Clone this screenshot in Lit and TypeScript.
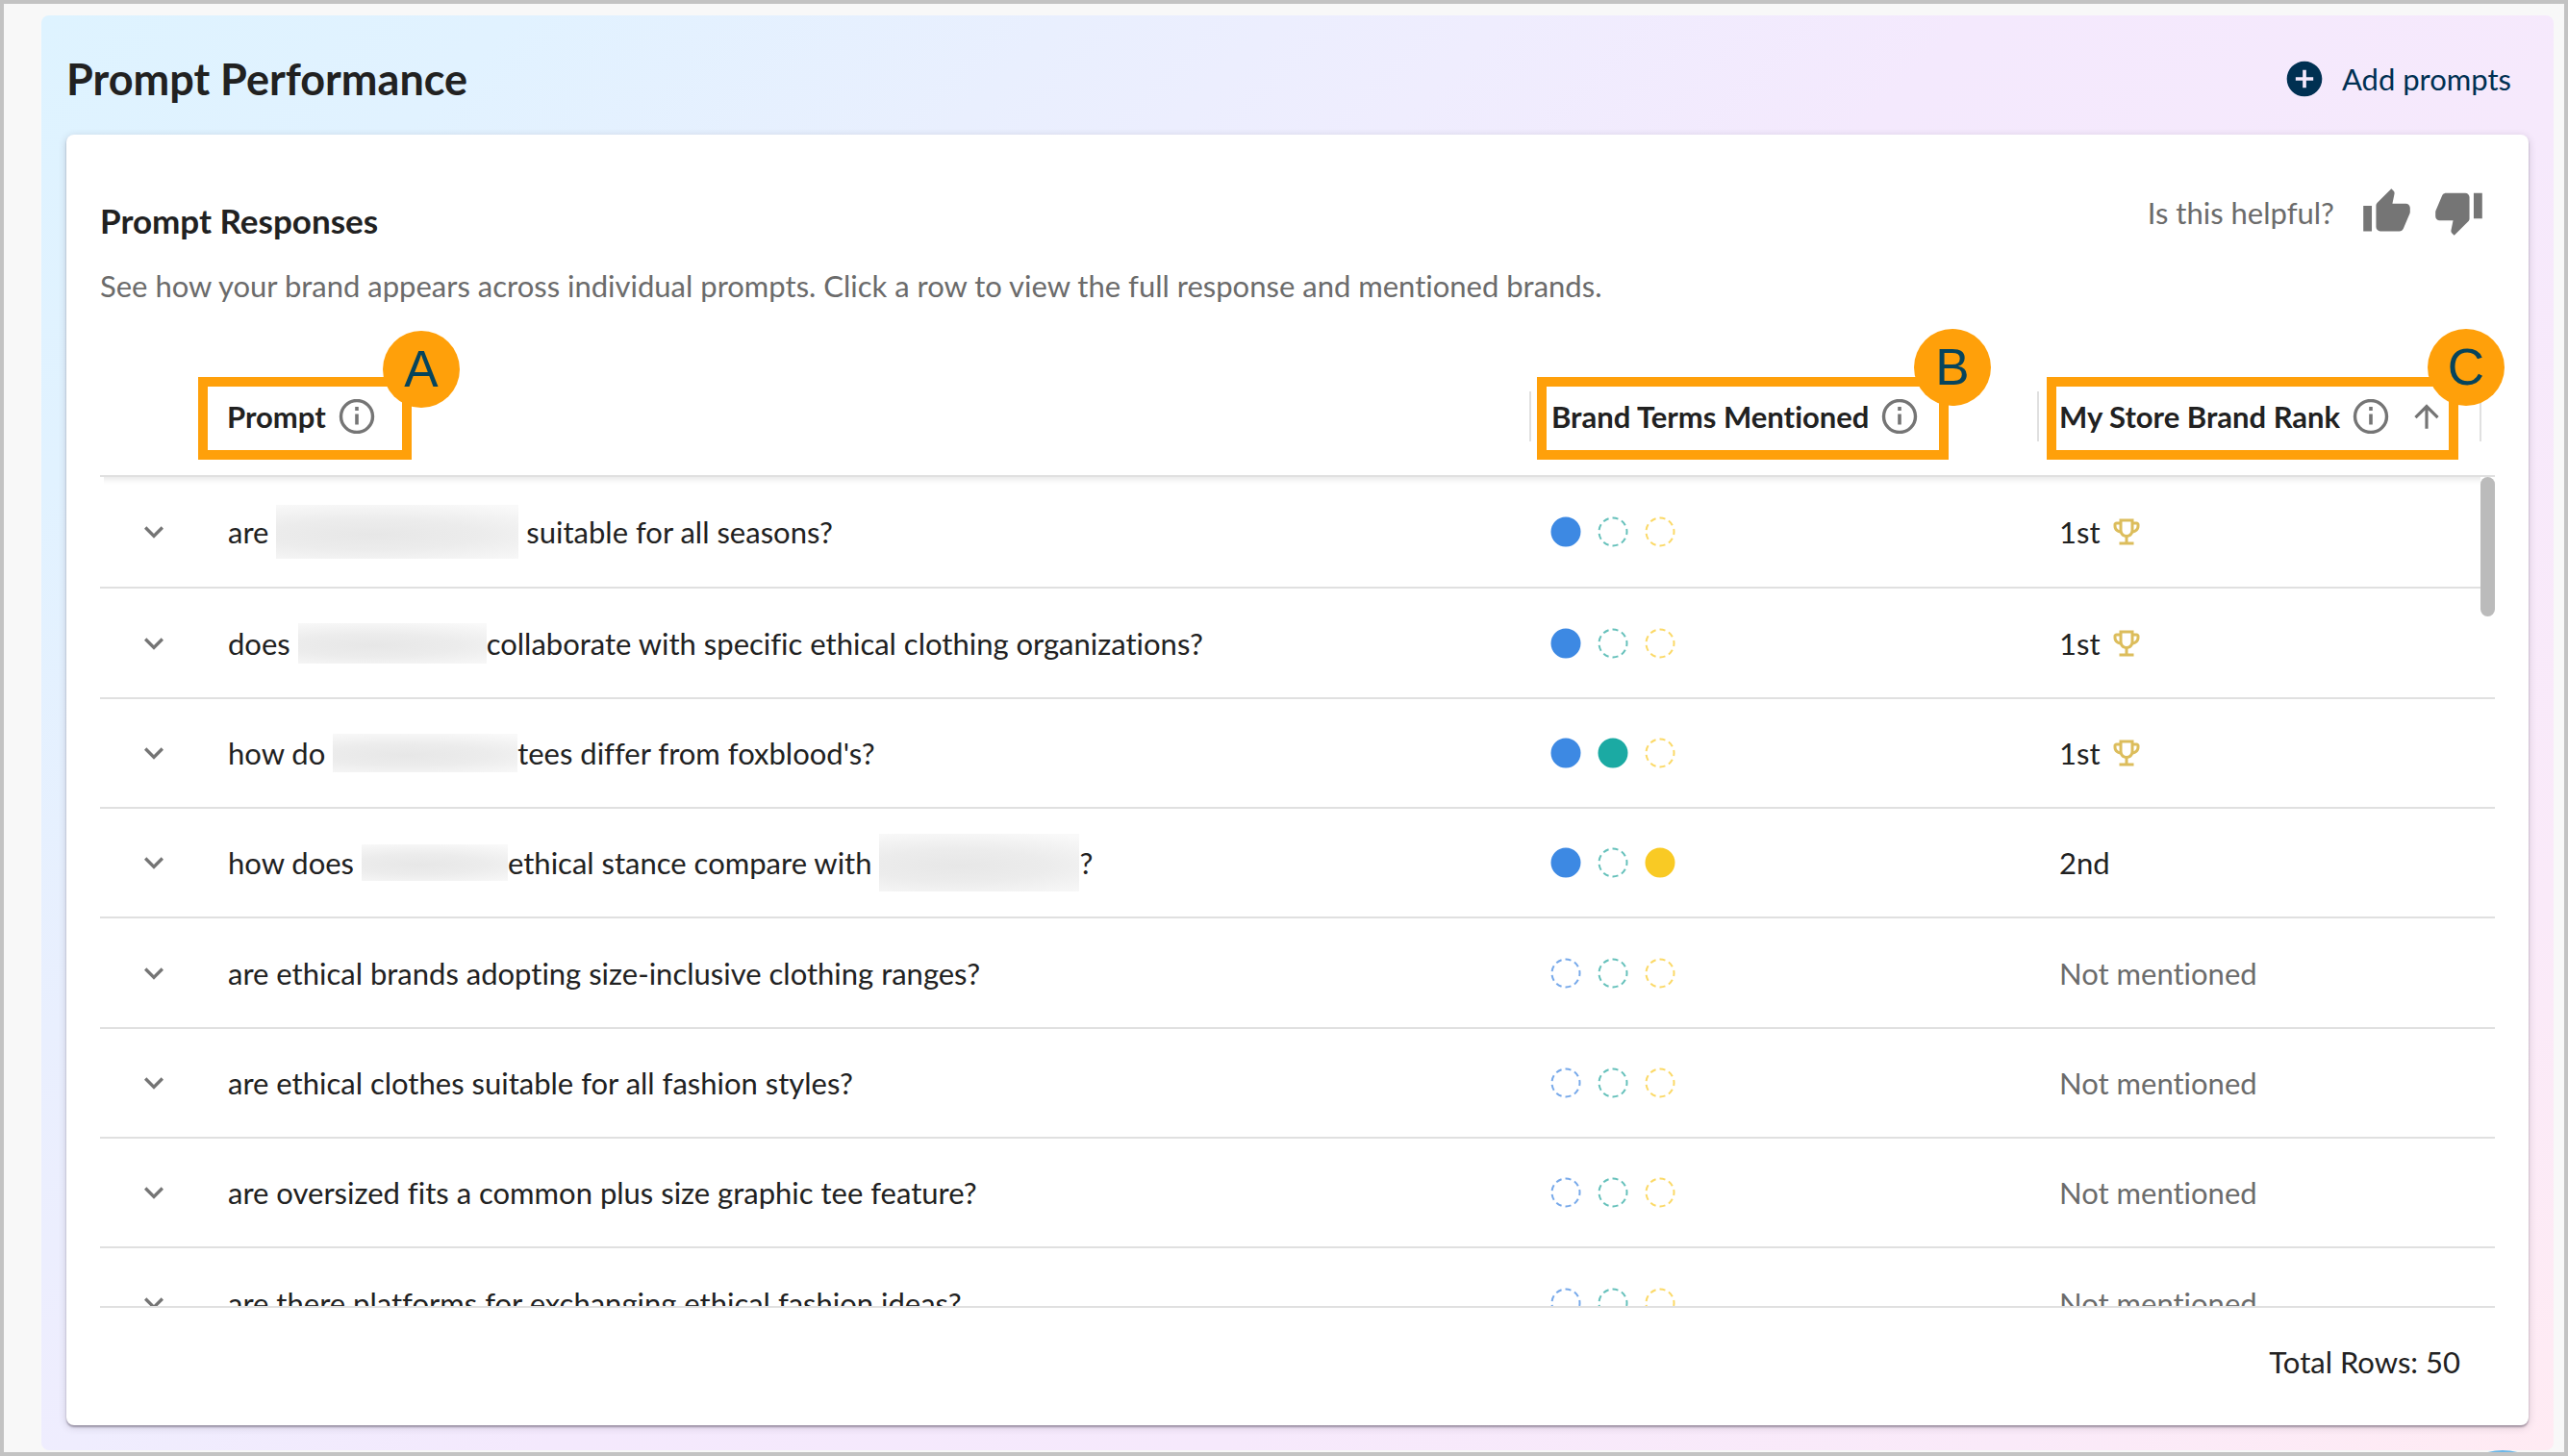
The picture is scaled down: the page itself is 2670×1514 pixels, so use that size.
import { LitElement, html, css, svg, nothing } from "lit";
import { customElement, property, state } from "lit/decorators.js";
import { classMap } from "lit/directives/class-map.js";

type Part = string | { hidden: "xl" | "l" | "m" | "s" | "xxl" };

interface PromptRow {
  prompt: Part[];
  mentions: [boolean, boolean, boolean];
  rank: string | null;
}

const ROWS: PromptRow[] = [
  { prompt: ["are ", { hidden: "xl" }, " suitable for all seasons?"], mentions: [true, false, false], rank: "1st" },
  { prompt: ["does ", { hidden: "l" }, "collaborate with specific ethical clothing organizations?"], mentions: [true, false, false], rank: "1st" },
  { prompt: ["how do ", { hidden: "m" }, "tees differ from foxblood's?"], mentions: [true, true, false], rank: "1st" },
  { prompt: ["how does ", { hidden: "s" }, "ethical stance compare with ", { hidden: "xxl" }, "?"], mentions: [true, false, true], rank: "2nd" },
  { prompt: ["are ethical brands adopting size-inclusive clothing ranges?"], mentions: [false, false, false], rank: null },
  { prompt: ["are ethical clothes suitable for all fashion styles?"], mentions: [false, false, false], rank: null },
  { prompt: ["are oversized fits a common plus size graphic tee feature?"], mentions: [false, false, false], rank: null },
  { prompt: ["are there platforms for exchanging ethical fashion ideas?"], mentions: [false, false, false], rank: null },
];

const TERM_COLORS = ["blue", "teal", "yellow"];

const ICONS = {
  add: svg`<path d="M12 2C6.48 2 2 6.48 2 12s4.48 10 10 10 10-4.48 10-10S17.52 2 12 2zm5 11h-4v4h-2v-4H7v-2h4V7h2v4h4v2z"/>`,
  up: svg`<path d="M1 21h4V9H1v12zm22-11c0-1.1-.9-2-2-2h-6.31l.95-4.57.03-.32c0-.41-.17-.79-.44-1.06L14.17 1 7.59 7.59C7.22 7.95 7 8.45 7 9v10c0 1.1.9 2 2 2h9c.83 0 1.54-.5 1.84-1.22l3.02-7.05c.09-.23.14-.47.14-.73v-2z"/>`,
  down: svg`<path d="M15 3H6c-.83 0-1.54.5-1.84 1.22l-3.02 7.05c-.09.23-.14.47-.14.73v2c0 1.1.9 2 2 2h6.31l-.95 4.57-.03.32c0 .41.17.79.44 1.06L9.83 23l6.59-6.59c.36-.36.58-.86.58-1.41V5c0-1.1-.9-2-2-2zm4 0v12h4V3h-4z"/>`,
  chevron: svg`<path d="M16.59 8.59 12 13.17 7.41 8.59 6 10l6 6 6-6z"/>`,
  arrow: svg`<path d="m4 12 1.41 1.41L11 7.83V20h2V7.83l5.58 5.59L20 12l-8-8-8 8z"/>`,
  trophy: svg`<path d="M19 5h-2V3H7v2H5c-1.1 0-2 .9-2 2v1c0 2.55 1.92 4.63 4.39 4.94.63 1.5 1.98 2.63 3.61 2.96V19H7v2h10v-2h-4v-3.1c1.63-.33 2.98-1.46 3.61-2.96C19.08 12.63 21 10.55 21 8V7c0-1.1-.9-2-2-2zM5 8V7h2v3.82C5.84 10.4 5 9.3 5 8zm7 6c-1.65 0-3-1.35-3-3V5h6v6c0 1.65-1.35 3-3 3zm7-6c0 1.3-.84 2.4-2 2.82V7h2v1z"/>`,
};

const icon = (name: keyof typeof ICONS, cls: string) =>
  html`<svg class="icon ${cls}" viewBox="0 0 24 24" aria-hidden="true">${ICONS[name]}</svg>`;

const base = css`
  * { box-sizing: border-box; }
  button {
    font: inherit;
    color: inherit;
    background: none;
    border: 0;
    padding: 0;
    margin: 0;
    cursor: pointer;
  }
  .icon { display: block; flex: none; fill: currentColor; }
`;

@customElement("term-dots")
export class TermDots extends LitElement {
  @property({ attribute: false }) mentions: boolean[] = [];

  static styles = css`
    :host { display: flex; gap: 17px; }
    .dot { display: block; width: 32px; height: 32px; }
    .ring { stroke-width: 2; stroke-dasharray: 6 4; stroke-dashoffset: 3; }
    .blue { fill: #3d89e3; }
    .teal { fill: #1baaa3; }
    .yellow { fill: #f9ca24; }
    .ring.blue { fill: none; stroke: #77a9ea; }
    .ring.teal { fill: none; stroke: #66c1bb; }
    .ring.yellow { fill: none; stroke: #fbd967; }
  `;

  render() {
    return this.mentions.map(
      (on, i) => html`<svg class="dot" viewBox="0 0 32 32" aria-hidden="true">
        <circle
          class=${classMap({ ring: !on, [TERM_COLORS[i]]: true })}
          cx="16" cy="16" r=${on ? 15.5 : 14.5} pathLength=${on ? nothing : 90}
        ></circle>
      </svg>`
    );
  }
}

@customElement("column-heading")
export class ColumnHeading extends LitElement {
  @property() label = "";
  @property({ type: Boolean }) sorted = false;

  static styles = [
    base,
    css`
      :host { display: flex; align-items: center; }
      .label { font-weight: 700; }
      .info { margin-left: 13px; color: #757575; }
      .info-icon { display: block; width: 38px; height: 36px; fill: none; stroke: currentColor; }
      .sort { margin-left: 20px; color: #757575; }
      .arrow { width: 38px; height: 38px; }
    `,
  ];

  render() {
    return html`
      <span class="label">${this.label}</span>
      <button class="info" aria-label="About ${this.label}">
        <svg class="info-icon" viewBox="0 0 38 36" aria-hidden="true">
          <circle cx="19" cy="18" r="16.5" stroke-width="3.4"></circle>
          <path d="M19 8v4M19 15.5v11" stroke-width="3.6"></path>
        </svg>
      </button>
      ${this.sorted
        ? html`<button class="sort" aria-label="Sorted ascending">${icon("arrow", "arrow")}</button>`
        : nothing}
    `;
  }
}

@customElement("app-root")
export class AppRoot extends LitElement {
  @state() private rows = ROWS;

  static styles = [
    base,
    css`
      :host {
        display: flex;
        box-sizing: border-box;
        height: 100vh;
        padding: 12px 11px 2px 39px;
        border: 4px solid #c3c3c3;
        background: #f8f8f8;
        color: #212121;
        font-family: Lato, "Open Sans", sans-serif;
        font-size: 31px;
        line-height: 40px;
        font-variant-ligatures: none;
        overflow: hidden;
        position: relative;
      }
      .panel {
        flex: 1;
        min-width: 0;
        display: flex;
        flex-direction: column;
        padding: 0 26px 26px;
        border-radius: 8px;
        background: linear-gradient(135deg, #def3ff 0%, #e1f2ff 12%, #e9effe 26%, #efedfe 37%, #f4e9fd 49%, #f6e9fc 66%, #faeaf9 86%, #ffebf3 100%);
      }
      .bar {
        display: flex;
        align-items: center;
        justify-content: space-between;
        height: 124px;
        padding: 8px 18px 0 0;
      }
      h1, h2, p { margin: 0; }
      h1 { font-size: 45px; line-height: 56px; font-weight: 700; }
      .add { display: flex; align-items: center; gap: 17px; color: #003052; }
      .add-icon { width: 44px; height: 44px; }
      .card {
        flex: 1;
        min-height: 0;
        display: flex;
        flex-direction: column;
        padding: 0 35px;
        border-radius: 8px;
        background: #fff;
        box-shadow: 0 2px 2px rgba(60, 50, 70, 0.4), 0 2px 8px rgba(60, 50, 70, 0.2);
      }
      .intro {
        flex: none;
        display: flex;
        justify-content: space-between;
        align-items: flex-start;
        height: 232px;
        padding: 54px 11px 0 0;
      }
      .intro-text { padding-top: 13px; display: flex; flex-direction: column; gap: 26px; }
      h2 { font-size: 35px; line-height: 44px; font-weight: 700; }
      .muted { color: #6b6b6b; }
      .feedback { display: flex; align-items: center; gap: 22px; }
      .question { padding-right: 6px; }
      .thumb { color: #757575; }
      .thumb-icon { width: 53px; height: 53px; }
      .grid {
        flex: 1;
        min-height: 0;
        position: relative;
        clip-path: inset(-60px -30px 0);
      }
      table { width: 100%; table-layout: fixed; border-collapse: separate; border-spacing: 0; }
      th, td { padding: 0; text-align: left; font-weight: 400; }
      .col-expand { width: 111px; }
      .col-terms { width: 528px; }
      .col-rank { width: 460px; }
      .col-gutter { width: 16px; }
      th { height: 124px; border-bottom: 2px solid #e0e0e0; position: relative; }
      .head { display: flex; align-items: center; gap: 21px; }
      .head-first { padding-left: 21px; }
      .sep { width: 2px; height: 52px; background: #e0e0e0; }
      .shade {
        position: absolute;
        top: 124px;
        left: 4px;
        right: 15px;
        height: 8px;
        background: linear-gradient(rgba(0, 0, 0, 0.08), rgba(0, 0, 0, 0.02) 60%, rgba(0, 0, 0, 0));
      }
      .thumb-bar {
        position: absolute;
        top: 124px;
        right: 0;
        width: 15px;
        height: 145px;
        border-radius: 8px;
        background: #bbbbbb;
      }
      td { height: 114px; border-bottom: 2px solid #e0e0e0; white-space: nowrap; }
      tr:nth-child(3n + 2) td { height: 115px; }
      tr:first-child td { height: 116px; }
      .expand { display: block; margin: 0 auto; color: #757575; }
      .chevron { width: 40px; height: 40px; }
      .line { display: flex; align-items: center; white-space: pre; }
      .prompt, .dots { padding-left: 22px; }
      .rank { padding-left: 23px; }
      .rank-line { display: flex; align-items: center; gap: 9px; }
      .trophy { width: 36px; height: 36px; color: #dcbd5c; }
      .redacted {
        display: block;
        background: radial-gradient(ellipse 100% 62% at 40% 55%, #e7e7e7 0%, #ececec 45%, #f9f9f9 100%);
      }
      .xl { width: 252px; height: 56px; }
      .l { width: 196px; height: 42px; }
      .m { width: 192px; height: 40px; }
      .s { width: 152px; height: 38px; }
      .xxl { width: 208px; height: 60px; }
      .callout {
        position: absolute;
        top: 20px;
        height: 86px;
        border: 10px solid #ffa00a;
        pointer-events: none;
        z-index: 1;
      }
      .callout-a { left: -9px; width: 222px; }
      .callout-b { left: 8px; width: 428px; }
      .callout-c { left: 10px; width: 428px; }
      .badge {
        position: absolute;
        top: -60px;
        right: -58px;
        width: 80px;
        height: 80px;
        border-radius: 50%;
        background: #ffa00a;
        color: #06445c;
        font: 400 53px/80px "Liberation Sans", Arial, sans-serif;
        text-align: center;
      }
      .callout-a .badge { top: -58px; right: -60px; }
      .callout-b .badge { right: -54px; }
      .footer {
        flex: none;
        display: flex;
        justify-content: flex-end;
        align-items: center;
        height: 124px;
        padding: 0 36px 10px 0;
        border-top: 2px solid #e0e0e0;
      }
      .chat {
        position: absolute;
        right: 4px;
        bottom: -118px;
        width: 120px;
        height: 120px;
        border-radius: 50%;
        background: #6ab7e8;
      }
    `,
  ];

  private prompt(parts: Part[]) {
    return parts.map((part) =>
      typeof part === "string"
        ? html`<span>${part}</span>`
        : html`<span class="redacted ${part.hidden}" role="img" aria-label="hidden brand"></span>`
    );
  }

  private row(r: PromptRow) {
    return html`<tr>
      <td><button class="expand" aria-label="Expand row">${icon("chevron", "chevron")}</button></td>
      <td class="prompt"><div class="line">${this.prompt(r.prompt)}</div></td>
      <td class="dots"><term-dots .mentions=${r.mentions}></term-dots></td>
      <td class="rank">
        ${r.rank
          ? html`<div class="rank-line">${r.rank}${r.rank === "1st" ? icon("trophy", "trophy") : nothing}</div>`
          : html`<span class="muted">Not mentioned</span>`}
      </td>
      <td></td>
    </tr>`;
  }

  private callout(letter: string) {
    return html`<div class="callout callout-${letter.toLowerCase()}"><span class="badge">${letter}</span></div>`;
  }

  render() {
    return html`
      <main class="panel">
        <header class="bar">
          <h1>Prompt Performance</h1>
          <button class="add">${icon("add", "add-icon")}<span>Add prompts</span></button>
        </header>
        <section class="card">
          <div class="intro">
            <div class="intro-text">
              <h2>Prompt Responses</h2>
              <p class="muted">See how your brand appears across individual prompts. Click a row to view the full response and mentioned brands.</p>
            </div>
            <div class="feedback">
              <span class="muted question">Is this helpful?</span>
              <button class="thumb" aria-label="Helpful">${icon("up", "thumb-icon")}</button>
              <button class="thumb" aria-label="Not helpful">${icon("down", "thumb-icon")}</button>
            </div>
          </div>
          <div class="grid">
            <table>
              <colgroup>
                <col class="col-expand" /><col /><col class="col-terms" /><col class="col-rank" /><col class="col-gutter" />
              </colgroup>
              <thead>
                <tr>
                  <th></th>
                  <th>
                    <div class="head head-first"><column-heading label="Prompt"></column-heading></div>
                    ${this.callout("A")}
                  </th>
                  <th>
                    <div class="head"><span class="sep"></span><column-heading label="Brand Terms Mentioned"></column-heading></div>
                    ${this.callout("B")}
                  </th>
                  <th>
                    <div class="head"><span class="sep"></span><column-heading label="My Store Brand Rank" sorted></column-heading></div>
                    ${this.callout("C")}
                  </th>
                  <th><div class="head"><span class="sep"></span></div></th>
                </tr>
              </thead>
              <tbody>${this.rows.map((r) => this.row(r))}</tbody>
            </table>
            <div class="shade"></div>
            <div class="thumb-bar"></div>
          </div>
          <footer class="footer">Total Rows: 50</footer>
        </section>
      </main>
      <div class="chat"></div>
    `;
  }
}
